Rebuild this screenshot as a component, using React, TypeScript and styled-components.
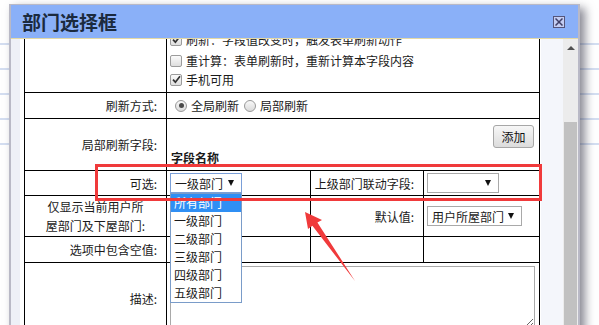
import styled, { createGlobalStyle } from "styled-components";

const GlobalStyle = createGlobalStyle`
  html, body {
    margin: 0;
    padding: 0;
    background: #fff;
  }
  body {
    font-family: "Noto Sans CJK SC", "Noto Sans", sans-serif;
    font-size: 12px;
    color: #1a1a1a;
  }
`;

const Page = styled.div`
  position: relative;
  width: 599px;
  height: 325px;
  overflow: hidden;
  background: #fff;
`;

// page behind the dialog
const Backdrop = styled.div`
  display: flex;
  flex-direction: column;
  padding-top: 20px;
`;

const BackLine = styled.div`
  height: 23px;
  border-bottom: 2px solid #d4def1;
`;

const Dialog = styled.div`
  position: absolute;
  left: 9px;
  top: 4px;
  width: 571px;
  height: 345px;
  box-sizing: border-box;
  border: 2px solid #b9b9c6;
  border-top-width: 1px;
  border-bottom: none;
  background: #fff;
  box-shadow: 5px 4px 9px rgba(40, 40, 60, 0.55);
  display: flex;
  flex-direction: column;
`;

const TitleBar = styled.div`
  height: 33px;
  flex-shrink: 0;
  background: #8ab0f8;
  border-bottom: 1px solid #e4d9a4;
  display: flex;
  align-items: center;
  justify-content: space-between;
  padding: 0 13px 0 11px;
`;

const Title = styled.h1`
  margin: 0;
  font-size: 19px;
  font-weight: bold;
  color: #1b2a3e;
  line-height: 24px;
`;

const CloseButton = styled.div`
  width: 12px;
  height: 12px;
  box-sizing: border-box;
  border: 1px solid #55557a;
  background: #c4cdf2;
  display: flex;
  align-items: center;
  justify-content: center;
`;

const Body = styled.div`
  flex: 1;
  display: flex;
  overflow: hidden;
`;

const Strip = styled.div`
  width: 9px;
  background: #eef0f7;
`;

const Content = styled.div`
  width: 521px;
  box-sizing: border-box;
  padding-left: 4px;
  overflow: hidden;
  background: #fff;
`;

const Pane = styled.div`
  width: 22px;
  background: #f4f6fb;
`;

const ScrollBar = styled.div`
  width: 15px;
  background: #ececec;
  display: flex;
  flex-direction: column;
  align-items: center;
`;

const ScrollArrow = styled.div`
  width: 0;
  height: 0;
  margin-top: 7px;
  border-left: 4px solid transparent;
  border-right: 4px solid transparent;
  border-bottom: 4px solid #505050;
`;

const Thumb = styled.div`
  width: 13px;
  margin-top: 72px;
  flex: 1;
  background: #c1c1c1;
`;

const FormTable = styled.table`
  width: 515px;
  margin-top: -10px;
  table-layout: fixed;
  border-collapse: collapse;
  td {
    border: 1px solid #000;
    padding: 0;
    font-size: 12px;
    line-height: 19px;
  }
`;

const LabelCell = styled.td<{ $h: number }>`
  height: ${(p) => p.$h}px;
  text-align: right;
  vertical-align: middle;
  white-space: nowrap;
  padding-right: 9px !important;
`;

const WrapLabelCell = styled.td<{ $h: number }>`
  height: ${(p) => p.$h}px;
  text-align: center;
  vertical-align: middle;
`;

const ValueCell = styled.td<{ $align?: string }>`
  vertical-align: ${(p) => p.$align || "middle"};
  padding-left: 3px !important;
`;

const RightCell = styled.td`
  vertical-align: middle;
  padding-left: 3px !important;
`;

const CheckList = styled.div`
  display: flex;
  flex-direction: column;
  padding-bottom: 3px;
`;

const CheckLine = styled.div`
  display: flex;
  align-items: center;
  gap: 4px;
  height: 19px;
  white-space: nowrap;
  &:first-child {
    margin-bottom: 2px;
  }
`;

const Box = styled.span`
  width: 12px;
  height: 12px;
  box-sizing: border-box;
  border: 1px solid #9c9c9c;
  border-radius: 2px;
  background: linear-gradient(#fbfbfb, #dedede);
  display: flex;
  align-items: center;
  justify-content: center;
`;

const RadioGroup = styled.div`
  display: flex;
  align-items: center;
  padding-left: 5px;
`;

const Radio = styled.span<{ $on?: boolean }>`
  width: 12px;
  height: 12px;
  box-sizing: border-box;
  border-radius: 50%;
  border: 1px solid #999;
  background: linear-gradient(#f8f8f8, #dadada);
  display: flex;
  align-items: center;
  justify-content: center;
  margin-right: 4px;
  &::after {
    content: "";
    width: 5px;
    height: 5px;
    border-radius: 50%;
    background: ${(p) => (p.$on ? "#4a4a4a" : "transparent")};
  }
`;

const RadioText = styled.span`
  margin-right: 5px;
`;

const FieldBlock = styled.div`
  display: flex;
  flex-direction: column;
  align-items: flex-start;
  padding: 6px 5px 0 0;
`;

const AddButton = styled.button`
  align-self: flex-end;
  width: 41px;
  height: 23px;
  box-sizing: border-box;
  border: 1px solid #a7a7a7;
  border-radius: 3px;
  background: linear-gradient(#f7f7f7, #dcdcdc);
  font-family: "Noto Sans CJK SC", sans-serif;
  font-size: 12px;
  color: #111;
  padding: 0;
`;

const FieldTitle = styled.div`
  font-weight: bold;
  padding-left: 1px;
`;

const SelectWrap = styled.div`
  position: relative;
  width: fit-content;
`;

const Select = styled.div<{ $w: number; $focus?: boolean }>`
  width: ${(p) => p.$w}px;
  height: 20px;
  box-sizing: border-box;
  border: 1px solid ${(p) => (p.$focus ? "#7a9fd8" : "#a9a9a9")};
  background: #fff;
  display: flex;
  align-items: center;
  justify-content: space-between;
  padding: 0 7px 0 4px;
  white-space: nowrap;
`;

const Caret = styled.span`
  width: 0;
  height: 0;
  margin-left: auto;
  border-left: 3.5px solid transparent;
  border-right: 3.5px solid transparent;
  border-top: 6px solid #111;
`;

const DropList = styled.ul`
  position: absolute;
  top: 100%;
  left: 0;
  z-index: 2;
  width: 72px;
  box-sizing: border-box;
  margin: 0;
  padding: 0;
  list-style: none;
  background: #fff;
  border: 1px solid #7a9cc9;
`;

const DropItem = styled.li<{ $active?: boolean }>`
  height: 18px;
  line-height: 18px;
  padding-left: 3px;
  background: ${(p) => (p.$active ? "#2f8ff4" : "#fff")};
  color: ${(p) => (p.$active ? "#fff" : "#1a1a1a")};
`;

const DescBox = styled.textarea`
  display: block;
  width: 365px;
  height: 62px;
  box-sizing: border-box;
  margin: 3px 0 0 0;
  border: 1px solid #a9a9a9;
  resize: both;
`;

const Highlight = styled.div`
  position: absolute;
  left: 95px;
  top: 164px;
  width: 447px;
  height: 37px;
  box-sizing: border-box;
  border: 3px solid #f03a3b;
  z-index: 5;
`;

const Pointer = styled.svg`
  position: absolute;
  left: 300px;
  top: 205px;
  z-index: 5;
`;

const Check = () => (
  <svg width="9" height="9" viewBox="0 0 9 9">
    <path d="M1 4.6 L3.4 7.2 L8 1.2" fill="none" stroke="#333" strokeWidth="1.7" />
  </svg>
);

const depts = ["所有部门", "一级部门", "二级部门", "三级部门", "四级部门", "五级部门"];

export default function App() {
  return (
    <Page>
      <GlobalStyle />
      <Backdrop>
        {[0, 1, 2, 3, 4].map((i) => (
          <BackLine key={i} />
        ))}
      </Backdrop>
      <Dialog>
        <TitleBar>
          <Title>部门选择框</Title>
          <CloseButton>
            <svg width="8" height="8" viewBox="0 0 8 8">
              <path d="M0.5 0.5 L7.5 7.5 M7.5 0.5 L0.5 7.5" stroke="#3f3f66" strokeWidth="1.5" />
            </svg>
          </CloseButton>
        </TitleBar>
        <Body>
          <Strip />
          <Content>
            <FormTable>
              <colgroup>
                <col style={{ width: 142 }} />
                <col style={{ width: 144 }} />
                <col style={{ width: 113 }} />
                <col style={{ width: 116 }} />
              </colgroup>
              <tbody>
                <tr>
                  <LabelCell $h={60}></LabelCell>
                  <ValueCell colSpan={3} $align="bottom">
                    <CheckList>
                      <CheckLine>
                        <Box>
                          <Check />
                        </Box>
                        刷新：字段值改变时，触发表单刷新动作
                      </CheckLine>
                      <CheckLine>
                        <Box />
                        重计算：表单刷新时，重新计算本字段内容
                      </CheckLine>
                      <CheckLine>
                        <Box>
                          <Check />
                        </Box>
                        手机可用
                      </CheckLine>
                    </CheckList>
                  </ValueCell>
                </tr>
                <tr>
                  <LabelCell $h={25}>刷新方式:</LabelCell>
                  <ValueCell colSpan={3}>
                    <RadioGroup>
                      <Radio $on />
                      <RadioText>全局刷新</RadioText>
                      <Radio />
                      <RadioText>局部刷新</RadioText>
                    </RadioGroup>
                  </ValueCell>
                </tr>
                <tr>
                  <LabelCell $h={51}>局部刷新字段:</LabelCell>
                  <ValueCell colSpan={3} $align="top">
                    <FieldBlock>
                      <AddButton>添加</AddButton>
                      <FieldTitle>字段名称</FieldTitle>
                    </FieldBlock>
                  </ValueCell>
                </tr>
                <tr>
                  <LabelCell $h={24}>可选:</LabelCell>
                  <ValueCell>
                    <SelectWrap>
                      <Select $w={72} $focus>
                        一级部门
                        <Caret />
                      </Select>
                      <DropList>
                        {depts.map((d, i) => (
                          <DropItem key={d} $active={i === 0}>
                            {d}
                          </DropItem>
                        ))}
                      </DropList>
                    </SelectWrap>
                  </ValueCell>
                  <LabelCell $h={24}>上级部门联动字段:</LabelCell>
                  <RightCell>
                    <Select $w={72}>
                      <Caret />
                    </Select>
                  </RightCell>
                </tr>
                <tr>
                  <WrapLabelCell $h={40}>
                    仅显示当前用户所
                    <br />
                    屋部门及下屋部门:
                  </WrapLabelCell>
                  <ValueCell></ValueCell>
                  <LabelCell $h={40}>默认值:</LabelCell>
                  <RightCell>
                    <Select $w={95}>
                      用户所屋部门
                      <Caret />
                    </Select>
                  </RightCell>
                </tr>
                <tr>
                  <LabelCell $h={25}>选项中包含空值:</LabelCell>
                  <ValueCell></ValueCell>
                  <LabelCell $h={25}></LabelCell>
                  <RightCell></RightCell>
                </tr>
                <tr>
                  <LabelCell $h={70}>描述:</LabelCell>
                  <ValueCell colSpan={3} $align="top">
                    <DescBox readOnly />
                  </ValueCell>
                </tr>
              </tbody>
            </FormTable>
          </Content>
          <Pane />
          <ScrollBar>
            <ScrollArrow />
            <Thumb />
          </ScrollBar>
        </Body>
      </Dialog>
      <Highlight />
      <Pointer width="60" height="80" viewBox="300 205 60 80">
        <polygon
          points="305,212 322,220 317.4,222.4 355,281 312.4,225.8 308,229"
          fill="#f03a3b"
        />
      </Pointer>
    </Page>
  );
}
